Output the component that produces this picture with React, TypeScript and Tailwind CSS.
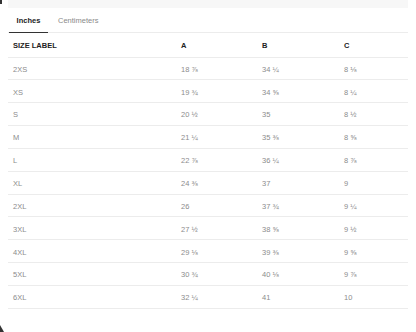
import React from "react";

const rows: [string, string, string, string][] = [
  ["2XS", "18 ⅞", "34 ¼", "8 ⅛"],
  ["XS", "19 ¾", "34 ⅝", "8 ¼"],
  ["S", "20 ½", "35", "8 ½"],
  ["M", "21 ¼", "35 ⅜", "8 ⅝"],
  ["L", "22 ⅞", "36 ¼", "8 ⅞"],
  ["XL", "24 ⅜", "37", "9"],
  ["2XL", "26", "37 ¾", "9 ¼"],
  ["3XL", "27 ½", "38 ⅝", "9 ½"],
  ["4XL", "29 ⅛", "39 ⅜", "9 ⅝"],
  ["5XL", "30 ¾", "40 ⅛", "9 ⅞"],
  ["6XL", "32 ¼", "41", "10"],
];

export default function App() {
  return (
    <div
      className="relative w-[416px] h-[332px] bg-white overflow-hidden"
      style={{ fontFamily: '"Liberation Sans", Arial, sans-serif' }}
    >
      <div className="absolute left-0 top-0 w-[2px] h-[4px] bg-[#333]" />
      <div className="absolute left-0 bottom-0 w-[4px] h-[7px]">
        <svg width="4" height="7" viewBox="0 0 4 7">
          <path d="M0 0 L4 7 L0 7 Z" fill="#333" />
        </svg>
      </div>
      <div className="ml-[8px] w-[400px]">
        <div className="h-[8px] bg-[#f7f7f7]" />
        <div className="flex h-[25px] border-b border-[#ececec]">
          <div className="relative flex items-center justify-center pt-[1px] w-[39px] ml-[1px] text-[7.5px] font-bold text-[#222]">
            Inches
            <div className="absolute left-0 right-0 bottom-[-1px] h-[1.5px] bg-[#333]" />
          </div>
          <div className="flex items-center pt-[1px] pl-[10px] text-[7.5px] text-[#8a8a8a]">
            Centimeters
          </div>
        </div>
        <div className="grid grid-cols-[168px_81px_82px_69px] h-[24.5px] pt-[2px] items-center border-b border-[#ececec] text-[7.5px] font-bold text-[#222]">
          <div className="pl-[5px]">SIZE LABEL</div>
          <div className="pl-[5px]">A</div>
          <div className="pl-[5px]">B</div>
          <div className="pl-[5px]">C</div>
        </div>
        {rows.map((r) => (
          <div
            key={r[0]}
            className="grid grid-cols-[168px_81px_82px_69px] h-[22.85px] pt-[2px] items-center border-b border-[#ececec] text-[7.5px] text-[#8c8c8c]"
          >
            {r.map((c, i) => (
              <div key={i} className="pl-[5px]">
                {c}
              </div>
            ))}
          </div>
        ))}
      </div>
    </div>
  );
}
